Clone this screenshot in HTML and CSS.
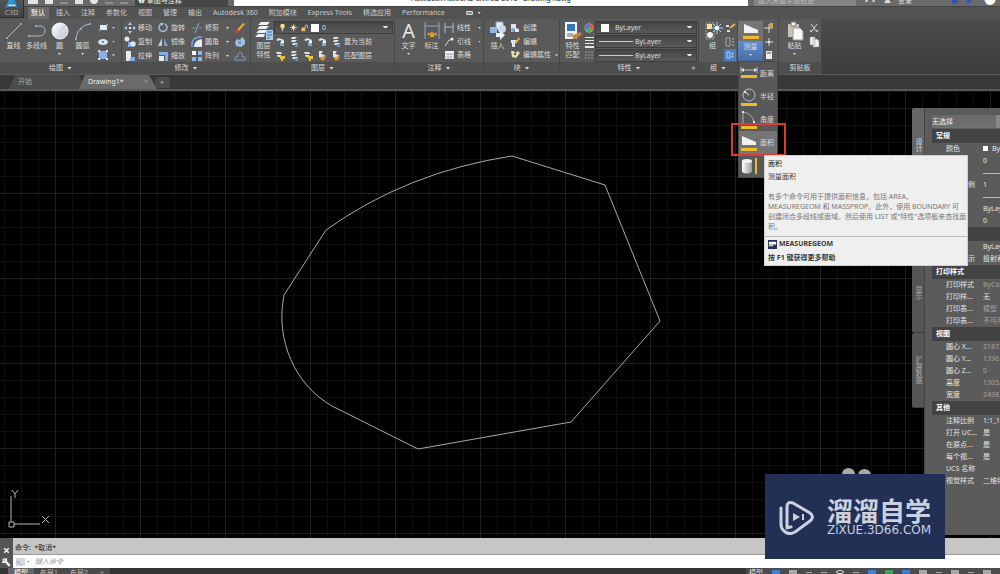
FILE: index.html
```html
<!DOCTYPE html>
<html lang="zh-CN">
<head>
<meta charset="utf-8">
<title>Autodesk AutoCAD Civil 3D 2016 - Drawing1.dwg</title>
<link rel="stylesheet" href="styles.css">
</head>
<body>
<svg class="sprite" aria-hidden="true">
  <defs>
    <linearGradient id="g-ball" x1="0" y1="0" x2="1" y2="1"><stop offset="0" stop-color="#fff"/><stop offset="1" stop-color="#b9c2cd"/></linearGradient>
    <linearGradient id="g-cyl"><stop offset="0" stop-color="#fff"/><stop offset="1" stop-color="#9a9a9a"/></linearGradient>
    <linearGradient id="g-logo" x1="0" y1="0" x2="1" y2="1"><stop offset="0" stop-color="#35b7e8"/><stop offset="1" stop-color="#0c5fa6"/></linearGradient>
  </defs>
  <symbol id="line" viewBox="0 0 20 20"><path d="M3 17 17 3" stroke="#b8c0c9" fill="none"/><path d="M2 16h2v2H2zM16 2h2v2h-2z" fill="#7ea6d6"/></symbol>
  <symbol id="pline" viewBox="0 0 20 20"><path d="M2 15H12C20 15 20 4 12 5H8" stroke="#aeb7c3" fill="none"/><path d="M1 14h2v2H1zM8 4h2v2H8z" fill="#7ea6d6"/></symbol>
  <symbol id="circle" viewBox="0 0 20 20"><circle cx="10" cy="10" r="8" fill="url(#g-ball)" stroke="#f2f4f6"/><path d="M10 10 15 5" stroke="#b4bdc8"/></symbol>
  <symbol id="arc" viewBox="0 0 20 20"><path d="M3 18C4 9 9 4 17 3" stroke="#aeb7c3" fill="none"/><path d="M2 17h2v2H2zM7 7h2v2H7zM16 2h2v2h-2z" fill="#7ea6d6"/></symbol>
  <symbol id="rect" viewBox="0 0 12 12"><path d="M3 3h7v5H3z" fill="#e8edf3"/><path d="M2 7h2v2H2zM9 2h2v2H9z" fill="#6fa3e0"/></symbol>
  <symbol id="ellipse" viewBox="0 0 12 12"><ellipse cx="6" cy="6" rx="5" ry="3" fill="#dbe6f2"/><circle cx="6" cy="6" r="1" fill="#3a78c0"/></symbol>
  <symbol id="hatch" viewBox="0 0 12 12"><path d="M2 2h8v8H2z" fill="#91b9e8"/><path d="M1 1h2v2H1zM9 1h2v2H9zM1 9h2v2H1zM9 9h2v2H9z" fill="#d6e6f8"/><path d="M3 9 9 3M3 6 6 3M6 9 9 6" stroke="#6f9fd6"/></symbol>
  <symbol id="move" viewBox="0 0 12 12"><path d="M6 0 8 3H4zM6 12 8 9H4zM0 6 3 4v4zM12 6 9 4v4z" fill="#a9c9ee"/><path d="M5 5h2v2H5z" fill="#e8eef5"/></symbol>
  <symbol id="rotate" viewBox="0 0 12 12"><path d="M8 2A4 4 0 1 1 4 2" fill="none" stroke="#a4b9d0" stroke-width="1.5"/><path d="M3 1h4L5 4z" fill="#a4c7ef"/></symbol>
  <symbol id="trim" viewBox="0 0 12 12"><path d="M1 6h4M8 6h3" stroke="#6d95c4"/><path d="M4 11 8 1" stroke="#90a9c4"/></symbol>
  <symbol id="copy" viewBox="0 0 12 12"><circle cx="3" cy="3" r="2.5" fill="#dbe6f2"/><path d="M4 6h3v5H4z" fill="#7db0ea"/><circle cx="9" cy="8" r="2.7" fill="#dbe6f2"/></symbol>
  <symbol id="mirror" viewBox="0 0 12 12"><path d="M5 2v8H1z" fill="#c2cfdd"/><path d="M7 2v8h4z" fill="#7f9fc4"/></symbol>
  <symbol id="fillet" viewBox="0 0 12 12"><path d="M1 11V7Q2 2 8 1h3" fill="none" stroke="#6fa3e0" stroke-width="1.5"/><path d="M3 11Q3 4 11 3v8z" fill="#e8edf3"/></symbol>
  <symbol id="stretch" viewBox="0 0 12 12"><path d="M2 1h5v10H2z" fill="#e8edf3"/><path d="M7 7h4v4H5z" fill="#7db0ea"/></symbol>
  <symbol id="scale" viewBox="0 0 12 12"><path d="M2 2h9v9H8V5H2z" fill="#7db0ea"/><path d="M2 6h5v5H2z" fill="#e8edf3"/></symbol>
  <symbol id="array" viewBox="0 0 12 12"><path d="M1 1h4v4H1zM7 1h4v4H7zM1 7h4v4H1zM7 7h4v4H7z" fill="#88b8ee"/><path d="M1 1h4v4H1z" fill="#fff"/></symbol>
  <symbol id="erase" viewBox="0 0 12 12"><path d="M3 8 9 1l2 1-6 7z" fill="#f0a63c"/><path d="M1 9l2-2 2 2-1 2H1z" fill="#d33b3b"/></symbol>
  <symbol id="explode" viewBox="0 0 12 12"><path d="M1 6 3 3 6 4 8 1l3 3v4L7 11 2 10z" fill="#9fbfe2"/><path d="M4 5h3v3H4z" fill="#7697bd"/></symbol>
  <symbol id="offset" viewBox="0 0 12 12"><path d="M1 10h10V7H8V3L6 2 4 4v3H1z" fill="none" stroke="#7897bd"/></symbol>
  <symbol id="layers" viewBox="0 0 20 20"><path d="M7 1h9l-3 3H4zM6 5h9l-3 3H3zM5 9h9l-3 3H2zM4 13h7l-1 3H1z" fill="#eef0f2"/><path d="M12 9h7v10h-7z" fill="#a8c8ec"/><path d="M13 11h5M13 14h5M13 17h3" stroke="#3f6ea8"/></symbol>
  <symbol id="bulb" viewBox="0 0 12 12"><path d="M3 4a3 3 0 0 1 6 0c0 2-2 2-2 5H5C5 6 3 6 3 4z" fill="#f5e08a"/><path d="M5 10h2v1H5z" fill="#ddd"/></symbol>
  <symbol id="sun" viewBox="0 0 12 12"><path d="M6 1v10M1 6h10M3 3l6 6M9 3 3 9" stroke="#d8cf9c"/><circle cx="6" cy="6" r="2" fill="#fff2b0"/></symbol>
  <symbol id="unlock" viewBox="0 0 12 12"><path d="M2 6h5v5H2z" fill="#e5c458"/><path d="M7 7V3h3v4" fill="none" stroke="#ccc"/></symbol>
  <symbol id="lay" viewBox="0 0 12 12"><path d="M2 4 5 2l5 2-1 2-3-2-2 1z" fill="#dfe5ec"/><path d="M6 6h4v4H6z" fill="#87a9d0"/><path d="M7 5h3v2H7z" fill="#f2f4f6"/></symbol>
  <symbol id="lay2" viewBox="0 0 12 12"><path d="M4 1h5L7 3H3zM4 4h5L7 6H3zM5 7h5L8 9H4z" fill="#dfe5ec"/><path d="M7 8h3v3H7z" fill="#6790c0"/></symbol>
  <symbol id="layy" viewBox="0 0 12 12"><path d="M2 2h5l1 2H3zM3 5h4v2H4z" fill="#dfe5ec"/><path d="M6 6h5v3H9v2H7V9H6z" fill="#e7c04b"/></symbol>
  <symbol id="layo" viewBox="0 0 12 12"><path d="M3 1h4L5 4l4 1-2 2H3z" fill="#dfe5ec"/><path d="M3 7h4l3-2-1 4-3 2z" fill="#e29338"/></symbol>
  <symbol id="dim" viewBox="0 0 20 20"><path d="M3 1v17M17 1v17M3 5h14" stroke="#8fa9c7" fill="none"/><path d="m5 14 2-3 1 2 2-3 2 3 2-2 1 4-3-1v2H8v-2z" fill="#e29a35"/></symbol>
  <symbol id="linear" viewBox="0 0 12 12"><path d="M2 1v10M10 1v10M2 5h8" stroke="#a8bdd5" fill="none"/></symbol>
  <symbol id="leader" viewBox="0 0 12 12"><path d="M2 10 6 4h2" stroke="#c9d2dc" fill="none"/><circle cx="9" cy="3" r="1.5" fill="#eee"/></symbol>
  <symbol id="table" viewBox="0 0 12 12"><path d="M2 2h9v8H2z" fill="#f0f3f6"/><path d="M2 5h9M2 8h9M5 4v6M8 4v6" stroke="#a3b4c6"/></symbol>
  <symbol id="insert" viewBox="0 0 20 20"><path d="M8 1h7v7H8z" fill="#e8edf3" stroke="#92adc9"/><circle cx="14" cy="8" r="4" fill="#cbd7e4"/><path d="M2 6h7v6H2z" fill="#8fb6e5"/><path d="M8 12h4v-2l5 4-5 5v-3H8z" fill="#eef1f4"/></symbol>
  <symbol id="create" viewBox="0 0 12 12"><path d="M2 2h5v4l3 1v3H6V7H4v3H2z" fill="#dfe5ec"/><circle cx="4" cy="8" r="2" fill="#86a8ce"/></symbol>
  <symbol id="bedit" viewBox="0 0 12 12"><path d="M2 4h6v3H6v4H3V7H2z" fill="#dfe5ec"/><path d="M6 6 10 1l1 2-4 5z" fill="#e2a145"/></symbol>
  <symbol id="attr" viewBox="0 0 12 12"><path d="M2 2h3l1 2 3-2 2 2-4 5-4-1z" fill="#e4d8b8"/><path d="M5 4h2v2H5z" fill="#705b30"/></symbol>
  <symbol id="match" viewBox="0 0 20 20"><path d="M2 1h12v17H2z" fill="#f2f4f6"/><path d="M4 3h8v7H4z" fill="#3675bc"/><path d="M4 13h6M4 15h6" stroke="#667"/><path d="m10 14 7-3 2 2-6 5h-3z" fill="#c98838"/></symbol>
  <symbol id="wheel" viewBox="0 0 12 12"><circle cx="6" cy="6" r="4.5" fill="#f3e16b"/><path d="M6 6V1.500A4.500 4.500 0 0 1 10 8z" fill="#e0574b"/><path d="M6 6 10 8A4.500 4.500 0 0 1 2 8z" fill="#4fae5e"/><path d="M6 6 2 8A4.500 4.500 0 0 1 6 1.500z" fill="#4b7fd6"/></symbol>
  <symbol id="weights" viewBox="0 0 12 12"><path d="M2 1h9v1H2zM2 4h9v1H2zM2 7h9v1H2zM2 10h9v2H2z" fill="#e6e6e6"/></symbol>
  <symbol id="ltypes" viewBox="0 0 12 12"><path d="M2 3h9M2 6h9M2 9h9" stroke="#9a9a9a" stroke-dasharray="2 1"/></symbol>
  <symbol id="group" viewBox="0 0 20 20"><path d="M3 2h8v16H3z" fill="none" stroke="#a9a9a9" stroke-dasharray="2 1"/><path d="M4 3h5v5H4z" fill="#f4e59a"/><circle cx="7" cy="14" r="3" fill="#f2f2f2"/><path d="M14 1v12M8 7h12M10 3l8 8M18 3l-8 8" stroke="#9fd3f5"/><circle cx="14" cy="7" r="2" fill="#fff"/></symbol>
  <symbol id="ungroup" viewBox="0 0 12 12"><path d="M2 3h3v2H2zM3 8h3v2H3z" fill="#ddd"/><path d="M6 6 11 2" stroke="#e8b53e" stroke-width="2"/></symbol>
  <symbol id="gedit" viewBox="0 0 12 12"><path d="M2 2h4v8H2z" fill="none" stroke="#aaa"/><path d="M8 3h2M8 6h2M8 9h2" stroke="#bbb"/></symbol>
  <symbol id="gsel" viewBox="0 0 12 12"><path d="M0 0h12v12H0z" fill="#4e7fc0"/><path d="M3 3h3v6H3zM8 4h1v1H8zM8 7h1v1H8z" fill="none" stroke="#b8d0ee"/></symbol>
  <symbol id="m-dist" viewBox="0 0 20 20"><path d="M2 3v6M18 3v6M2 6h16" stroke="#a9b9cc" fill="none"/><path d="m2 6 3-2v4zM18 6l-3-2v4z" fill="#dce5f0"/><path d="M2 11h16v3H2z" fill="#edb92e"/></symbol>
  <symbol id="m-rad" viewBox="0 0 20 20"><circle cx="10" cy="8" r="6" fill="none" stroke="#b9bec4"/><path d="M10 8 6 5" stroke="#eee"/><circle cx="6" cy="5" r="1" fill="#fff"/><path d="M2 16h16v3H2z" fill="#edb92e"/></symbol>
  <symbol id="m-ang" viewBox="0 0 20 20"><path d="M4 1v13h12M4 2C11 3 14 7 15 13" fill="none" stroke="#aab2bb"/><path d="M3 1h2v2H3zM14 11h2v2h-2z" fill="#dde3e9"/><path d="M2 16h16v3H2z" fill="#edb92e"/></symbol>
  <symbol id="m-area" viewBox="0 0 20 20"><path d="M3 3v9h14V9z" fill="#f0f1f2"/><path d="M2 15h16v3H2z" fill="#edb92e"/></symbol>
  <symbol id="m-vol" viewBox="0 0 20 20"><path d="M3 5q5-3 10 0v11q-5 3-10 0z" fill="url(#g-cyl)"/><ellipse cx="8" cy="5" rx="5" ry="2" fill="#f1f1f1"/><path d="M16 2h2v16h-2z" fill="#edb92e"/></symbol>
  <symbol id="qsel" viewBox="0 0 12 12"><path d="M6 2v9M1 6h9" stroke="#ddd"/><path d="M7 1h3v4H7z" fill="#e2a145"/></symbol>
  <symbol id="point" viewBox="0 0 12 12"><path d="M6 2v8M2 6h8" stroke="#d5d8dc"/><circle cx="6" cy="6" r="1" fill="#fff"/></symbol>
  <symbol id="calc" viewBox="0 0 12 12"><path d="M3 2h6v8H3z" fill="#eee"/><path d="M4 3h4v2H4z" fill="#899"/></symbol>
  <symbol id="paste" viewBox="0 0 20 20"><path d="M3 3h11v13H3z" fill="#c8c3b5"/><path d="M6 1h5v4H6z" fill="#eee" stroke="#777"/><path d="M8 7h7l3 3v9H8z" fill="#f5f6f7" stroke="#999"/></symbol>
  <symbol id="cut" viewBox="0 0 12 12"><path d="M3 2 8 9M9 2 4 9" stroke="#ccc"/><path d="M2 8h2v2H2zM8 8h2v2H8z" fill="#bbb"/></symbol>
  <symbol id="clip" viewBox="0 0 12 12"><path d="M2 1h5v8H2zM5 3h4l2 2v6H5z" fill="#f2f2f2" stroke="#888" stroke-width=".5"/></symbol>
</svg>

<header class="titlebar">
  <div class="quick">
    <i class="q wide"></i><i class="q"></i><i class="q dim"></i><i class="q"></i><i class="q round"></i><i class="q dim"></i><i class="q dim"></i>
    <button class="workspace">✿ 草图与注释</button>
  </div>
  <div class="doc-title">Autodesk AutoCAD Civil 3D 2016 &nbsp; Drawing1.dwg</div>
  <div class="infocenter">
    <input class="search" aria-label="搜索" placeholder="键入关键字或短语">
    <span class="info">▪▪</span><span class="info">▲</span><span class="info">登录</span><span class="info blue shift">■</span><span class="info blue">▲</span><span class="info end">●</span>
  </div>
</header>
<button class="app-button" aria-label="应用程序菜单">
  <svg viewBox="0 0 16 10" class="app-logo"><path d="M0 9 5 0h6l5 9-4-1-2-3H6L4 8z" fill="url(#g-logo)"/><path d="M4 5h8v2H4z" fill="#bfe8fa"/></svg>
  <span>C3D</span>
</button>

<nav class="tabs">
  <button class="tab active">默认</button><button class="tab">插入</button><button class="tab">注释</button><button class="tab">参数化</button><button class="tab">视图</button><button class="tab">管理</button><button class="tab">输出</button><button class="tab">Autodesk 360</button><button class="tab">附加模块</button><button class="tab">Express Tools</button><button class="tab">精选应用</button><button class="tab">Performance</button>
  <button class="tab-toggle" aria-label="最小化功能区"><i class="pill"></i><i class="arr"></i></button>
</nav>

<section class="ribbon">
  <div class="panel">
    <div class="tools draw">
      <button class="big"><svg><use href="#line"/></svg>直线</button>
      <button class="big"><svg><use href="#pline"/></svg>多段线</button>
      <button class="big"><svg><use href="#circle"/></svg>圆<i class="arr"></i></button>
      <button class="big"><svg><use href="#arc"/></svg>圆弧<i class="arr"></i></button>
      <div class="stack">
        <button class="small" aria-label="矩形"><svg><use href="#rect"/></svg><i class="arr"></i></button>
        <button class="small" aria-label="椭圆"><svg><use href="#ellipse"/></svg><i class="arr"></i></button>
        <button class="small" aria-label="图案填充"><svg><use href="#hatch"/></svg><i class="arr"></i></button>
      </div>
    </div>
    <h2 class="panel-title">绘图<i class="arr"></i></h2>
  </div>

  <div class="panel">
    <div class="tools modify">
      <button class="small"><svg><use href="#move"/></svg>移动</button><button class="small"><svg><use href="#rotate"/></svg>旋转</button><button class="small"><svg><use href="#trim"/></svg>修剪<i class="arr"></i></button><button class="small" aria-label="删除"><svg><use href="#erase"/></svg></button>
      <button class="small"><svg><use href="#copy"/></svg>复制</button><button class="small"><svg><use href="#mirror"/></svg>镜像</button><button class="small"><svg><use href="#fillet"/></svg>圆角<i class="arr"></i></button><button class="small" aria-label="分解"><svg><use href="#explode"/></svg></button>
      <button class="small"><svg><use href="#stretch"/></svg>拉伸</button><button class="small"><svg><use href="#scale"/></svg>缩放</button><button class="small"><svg><use href="#array"/></svg>阵列<i class="arr"></i></button><button class="small" aria-label="偏移"><svg><use href="#offset"/></svg></button>
    </div>
    <h2 class="panel-title">修改<i class="arr"></i></h2>
  </div>

  <div class="panel">
    <div class="tools">
      <button class="big tall"><svg><use href="#layers"/></svg>图层<br>特性</button>
      <div class="stack layer-stack">
        <div class="combo">
          <svg><use href="#bulb"/></svg><svg><use href="#sun"/></svg><svg><use href="#unlock"/></svg><i class="swatch"></i>
          <select aria-label="图层"><option>0</option></select>
        </div>
        <div class="layer-row">
          <button class="small" aria-label="关闭图层"><svg><use href="#lay"/></svg></button><button class="small" aria-label="隔离图层"><svg><use href="#lay2"/></svg></button><button class="small" aria-label="冻结图层"><svg><use href="#lay"/></svg></button><button class="small" aria-label="锁定图层"><svg><use href="#lay"/></svg></button><button class="small"><svg><use href="#lay2"/></svg>置为当前</button>
        </div>
        <div class="layer-row">
          <button class="small" aria-label="打开图层"><svg><use href="#layy"/></svg></button><button class="small" aria-label="取消隔离"><svg><use href="#lay2"/></svg></button><button class="small" aria-label="解冻图层"><svg><use href="#layy"/></svg></button><button class="small" aria-label="解锁图层"><svg><use href="#layo"/></svg></button><button class="small"><svg><use href="#layo"/></svg>匹配图层</button>
        </div>
      </div>
    </div>
    <h2 class="panel-title">图层<i class="arr"></i></h2>
  </div>

  <div class="panel">
    <div class="tools">
      <button class="big"><span class="letter">A</span>文字<i class="arr"></i></button>
      <button class="big"><svg><use href="#dim"/></svg>标注</button>
      <div class="stack wide-stack">
        <button class="small"><svg><use href="#linear"/></svg>线性<i class="arr"></i></button>
        <button class="small"><svg><use href="#leader"/></svg>引线<i class="arr"></i></button>
        <button class="small"><svg><use href="#table"/></svg>表格</button>
      </div>
    </div>
    <h2 class="panel-title">注释<i class="arr"></i></h2>
  </div>

  <div class="panel">
    <div class="tools">
      <button class="big"><svg><use href="#insert"/></svg>插入</button>
      <div class="stack block-stack">
        <button class="small"><svg><use href="#create"/></svg>创建</button>
        <button class="small"><svg><use href="#bedit"/></svg>编辑</button>
        <button class="small"><svg><use href="#attr"/></svg>编辑属性<i class="arr near"></i></button>
      </div>
    </div>
    <h2 class="panel-title">块<i class="arr"></i></h2>
  </div>

  <div class="panel">
    <div class="tools">
      <button class="big tall"><svg><use href="#match"/></svg>特性<br>匹配</button>
      <div class="stack">
        <button class="small" aria-label="颜色"><svg><use href="#wheel"/></svg></button>
        <button class="small" aria-label="线宽"><svg><use href="#weights"/></svg></button>
        <button class="small" aria-label="线型"><svg><use href="#ltypes"/></svg></button>
      </div>
      <div class="stack prop-stack">
        <div class="combo"><i class="swatch lead"></i><select aria-label="对象颜色"><option>ByLayer</option></select></div>
        <div class="combo"><i class="rule"></i><select aria-label="对象线宽"><option>ByLayer</option></select></div>
        <div class="combo"><i class="rule"></i><select aria-label="对象线型"><option>ByLayer</option></select></div>
      </div>
    </div>
    <h2 class="panel-title">特性<i class="arr"></i><span class="launcher">»</span></h2>
  </div>

  <div class="panel">
    <div class="tools">
      <button class="big"><svg><use href="#group"/></svg>组</button>
      <div class="stack">
        <button class="small" aria-label="解除编组"><svg><use href="#ungroup"/></svg></button>
        <button class="small" aria-label="组编辑"><svg><use href="#gedit"/></svg></button>
        <button class="small" aria-label="启用组选择"><svg><use href="#gsel"/></svg></button>
      </div>
    </div>
    <h2 class="panel-title">组<i class="arr"></i></h2>
  </div>

  <div class="panel utilities">
    <div class="tools flush">
      <button class="big measure"><svg><use href="#m-area"/></svg><span class="measure-label">测量<i class="arr"></i></span></button>
      <div class="stack">
        <button class="small" aria-label="快速选择"><svg><use href="#qsel"/></svg></button>
        <button class="small" aria-label="点坐标"><svg><use href="#point"/></svg></button>
        <button class="small" aria-label="计算器"><svg><use href="#calc"/></svg></button>
      </div>
    </div>
    <div class="menu">
      <button class="menu-item"><svg><use href="#m-dist"/></svg>距离</button>
      <button class="menu-item"><svg><use href="#m-rad"/></svg>半径</button>
      <button class="menu-item"><svg><use href="#m-ang"/></svg>角度</button>
      <button class="menu-item hover"><svg><use href="#m-area"/></svg>面积</button>
      <button class="menu-item" aria-label="体积"><svg><use href="#m-vol"/></svg></button>
      <div class="marker"></div>
      <aside class="tooltip" role="tooltip">
        <div class="tip-body">
          <strong class="tip-title">面积</strong>
          <p>测量面积</p>
          <p class="tip-text">有多个命令可用于提供面积信息，包括 AREA、<br>MEASUREGEOM 和 MASSPROP。此外，使用 BOUNDARY 可<br>创建闭合多段线或面域。然后使用 LIST 或"特性"选项板来查找面<br>积。</p>
        </div>
        <div class="tip-foot">
          <strong class="tip-cmd"><svg viewBox="0 0 10 10"><path d="M0 0h10v10H0z" fill="#222f6b"/><path d="M1 2h8v3H1z" fill="#fff"/><path d="M1 5h5v2H1z" fill="#e8d84a"/></svg>MEASUREGEOM</strong>
          <strong>按 F1 键获得更多帮助</strong>
        </div>
      </aside>
    </div>
  </div>

  <div class="panel">
    <div class="tools">
      <button class="big paste"><svg><use href="#paste"/></svg>粘贴<i class="arr"></i></button>
      <div class="stack">
        <button class="small" aria-label="剪切"><svg><use href="#cut"/></svg></button>
        <button class="small" aria-label="复制剪裁"><svg><use href="#clip"/></svg></button>
      </div>
    </div>
    <h2 class="panel-title">剪贴板</h2>
  </div>
</section>

<nav class="files">
  <button class="file">开始</button>
  <button class="file current">Drawing1*<span class="close">×</span></button>
  <button class="file add" aria-label="新图形">+</button>
</nav>

<main class="canvas">
  <svg class="drawing" role="img" aria-label="多段线图形">
    <defs>
      <pattern id="minor" width="17" height="17" patternUnits="userSpaceOnUse" x="55" y="17"><path d="M.5 0V17M0 .5H17" stroke="#0e0e0e" fill="none"/></pattern>
      <pattern id="major" width="85" height="85" patternUnits="userSpaceOnUse" x="55" y="17"><path d="M.5 0V85M0 .5H85" stroke="#202020" fill="none"/></pattern>
    </defs>
    <rect width="100%" height="100%" fill="url(#minor)"/>
    <rect width="100%" height="100%" fill="url(#major)"/>
    <path d="M512 65 605 94 660 230 571 331 418 358 332 315C295 294 275 249 284 204L326 139Q407 81 512 65Z" fill="none" stroke="#a8a8a8"/>
  </svg>
  <svg class="ucs" viewBox="0 0 52 46" aria-hidden="true"><path d="M5 32V6M8 34H34M3 32h5v5H3zM6 0 9 4 12 0M9 4V8M36 26l7 7M43 26l-7 7" fill="none" stroke="#b5b5b5"/></svg>
  <i class="blob"></i><i class="blob second"></i>

  <aside class="palette">
    <div class="side-tabs"><button class="side design">设计</button><button class="side shown">显示</button><button class="side ext">扩展数据</button></div>
    <div class="props">
      <select class="object-type" aria-label="选择对象"><option>无选择</option></select>
      <table class="prop-table">
        <colgroup><col class="name-col"><col></colgroup>
        <tbody>
          <tr><th colspan="2">常规</th></tr>
          <tr><td>颜色</td><td><i class="chip"></i>ByLayer</td></tr>
          <tr><td></td><td>0</td></tr>
          <tr><td></td><td><i class="dash"></i></td></tr>
          <tr><td class="tail">例</td><td>1</td></tr>
          <tr><td></td><td><i class="dash"></i></td></tr>
          <tr><td></td><td>ByLayer</td></tr>
          <tr><td></td><td>0</td></tr>
        </tbody>
        <tbody>
          <tr><th colspan="2">&nbsp;</th></tr>
          <tr><td></td><td>ByLayer</td></tr>
          <tr><td class="tail">示</td><td>投射和</td></tr>
        </tbody>
        <tbody>
          <tr><th colspan="2">打印样式</th></tr>
          <tr><td>打印样式</td><td class="off">ByColor</td></tr>
          <tr><td>打印样...</td><td>无</td></tr>
          <tr><td>打印表...</td><td class="off">模型</td></tr>
          <tr><td>打印表...</td><td class="off">不可用</td></tr>
        </tbody>
        <tbody>
          <tr><th colspan="2">视图</th></tr>
          <tr><td>圆心 X...</td><td class="off">2187.</td></tr>
          <tr><td>圆心 Y...</td><td class="off">1396.</td></tr>
          <tr><td>圆心 Z...</td><td class="off">0</td></tr>
          <tr><td>高度</td><td class="off">1305.</td></tr>
          <tr><td>宽度</td><td class="off">2498.</td></tr>
        </tbody>
        <tbody>
          <tr><th colspan="2">其他</th></tr>
          <tr><td>注释比例</td><td>1:1_1</td></tr>
          <tr><td>打开 UC...</td><td>是</td></tr>
          <tr><td>在原点...</td><td>是</td></tr>
          <tr><td>每个视...</td><td>是</td></tr>
          <tr><td>UCS 名称</td><td></td></tr>
          <tr><td>视觉样式</td><td>二维线</td></tr>
        </tbody>
      </table>
    </div>
  </aside>
</main>

<section class="command">
  <div class="grip">
    <button aria-label="关闭"><svg viewBox="0 0 8 8"><path d="m2 2 4 4M6 2 2 6" stroke="#eee" stroke-width="1.500"/></svg></button>
    <button aria-label="自定义"><svg viewBox="0 0 8 8"><path d="m3 3 4 4" stroke="#eee" stroke-width="2"/><path d="M1 1h2v2H1zM4 0v4H0" fill="none" stroke="#eee"/></svg></button>
  </div>
  <div class="console">
    <div class="history">命令:&nbsp; *取消*</div>
    <label class="prompt"><span class="prompt-icon">&gt;_</span><i class="arr"></i><input aria-label="命令行" placeholder="键入命令"></label>
  </div>
</section>

<footer class="status">
  <button class="layout on">模型</button><button class="layout">布局1</button><button class="layout">布局2</button><button class="layout">+</button>
  <div class="status-icons">
    <span>模型</span><i class="s blue"></i><i class="s"></i><i class="s thin"></i><i class="s thin"></i><i class="s ring"></i><i class="s thin"></i><i class="s blue"></i><i class="s green"></i><i class="s blue"></i><i class="s"></i><i class="s thin"></i><i class="s"></i><i class="s thin"></i><i class="s"></i>
  </div>
</footer>

<div class="watermark">
  <svg viewBox="0 0 36 36" class="wm-logo"><path d="M8 29V8q0-6 6-4l17 10q5 4 0 8L16 33q-7 4-12-2Q2 29 2 24V9" fill="none" stroke="#cbd1de" stroke-width="3" stroke-linecap="round" stroke-linejoin="round"/><path d="M8 27q2 3 5 0" fill="none" stroke="#cbd1de" stroke-width="3"/><path d="m14 14 7 4-7 4zM23 15h2v6h-2z" fill="#cbd1de"/></svg>
  <div class="wm-text"><div class="wm-name">溜溜自学</div><div class="wm-url">ZiXUE.3D66.COM</div></div>
</div>
</body>
</html>
```

FILE: styles.css
```css
* { box-sizing: border-box; margin: 0; padding: 0; }
html, body { height: 100%; }
body {
  display: flex; flex-direction: column; position: relative; overflow: hidden;
  background: #000; color: #dcdcdc;
  font: 7px/10px "Noto Sans", "Noto Sans CJK SC", sans-serif;
}
button, input, select { font: inherit; color: inherit; background: none; border: 0; border-radius: 0; appearance: none; outline: 0; }
button { white-space: nowrap; }
svg { display: block; flex: none; }
i { display: block; flex: none; font-style: normal; }
.sprite { position: absolute; width: 0; height: 0; }
.arr { width: 3px; height: 2px; background: #ddd; clip-path: polygon(0 0, 100% 0, 50% 100%); }

/* title bar */
.titlebar { flex: none; display: flex; height: 7px; overflow: hidden; background: #6a6a6a; border-bottom: 1px solid #444; }
.quick { width: 234px; padding: 0 6px 0 28px; display: flex; gap: 7px; align-items: flex-end; background: #696969; }
.q { width: 8px; height: 4px; background: #e4e4e4; margin-bottom: 2px; }
.q.wide { width: 10px; }
.q.dim { background: #8e8e8e; height: 2px; }
.q.round { border-radius: 0 0 4px 4px; }
.workspace { margin-left: auto; width: 106px; background: #474747; text-align: left; padding: 0 3px; color: #eee; }
.doc-title { flex: 1 1 514px; display: flex; justify-content: center; align-items: flex-end; background: #fff; color: #222; font-size: 7px; line-height: 10px; padding-bottom: 2px; }
.infocenter { flex: 0 0 252px; padding: 0 4px 0 6px; display: flex; gap: 7px; align-items: flex-end; }
.search { width: 102px; height: 12px; background: #858585; padding-left: 4px; }
.search::placeholder { color: #bbb; opacity: 1; }
.info { color: #ddd; }
.info.blue { color: #3556a8; }
.info.shift { margin-left: 32px; }
.info.end { margin-left: auto; font-size: 12px; color: #fff; }
.app-button {
  position: absolute; left: 0; top: 0; width: 24px; height: 18px; z-index: 2;
  background: linear-gradient(#555, #444); border-right: 1px solid #2d2d2d; border-bottom: 1px solid #2d2d2d;
  display: flex; flex-direction: column; align-items: center; color: #aaa; line-height: 8px;
}
.app-logo { width: 16px; height: 9px; }

/* ribbon tabs */
.tabs { flex: none; display: flex; height: 12px; padding-left: 28px; background: #535353; color: #ccc; }
.tab { padding: 0 6px 0 5px; line-height: 12px; }
.tab.active { background: #6b6b6b; color: #fff; padding: 0 4px 0 3px; margin-right: 2px; }
.tab-toggle { display: flex; align-items: center; gap: 5px; margin-left: 15px; }
.pill { width: 7px; height: 4px; border: 1px solid #ddd; background: #888; border-radius: 1px; }

/* ribbon */
.ribbon { flex: none; display: flex; height: 56px; background: linear-gradient(#4c4c4c, #3c3c3c); border-bottom: 1px solid #5b5b5b; }
.panel { display: flex; flex-direction: column; background: #5a5a5a; border-right: 1px solid #484848; }
.tools { flex: none; display: flex; height: 43px; padding: 2px 1px 0 2px; }
.tools.flush { padding-left: 0; }
.panel-title { flex: 1; display: flex; align-items: center; justify-content: center; gap: 4px; background: #4e4e4e; font-size: 7px; font-weight: 400; position: relative; }
.panel-title .arr { width: 5px; height: 3px; }
.launcher { position: absolute; right: 3px; top: 1px; }
.big { width: 23px; display: flex; flex-direction: column; align-items: center; }
.big svg { width: 20px; height: 20px; }
.big .arr { margin-top: 2px; }
.big.tall { width: 21px; line-height: 9px; }
.letter { height: 20px; font: 20px/20px "Open Sans", "Noto Sans", sans-serif; color: #eee; }
.stack { display: flex; flex-direction: column; }
.small { height: 14px; display: flex; align-items: center; gap: 2px; text-align: left; }
.small svg { width: 12px; height: 12px; }
.small .arr { margin-left: 5px; }
.small .arr.near { margin-left: 2px; }
.draw .stack { padding-left: 3px; width: 26px; }
.draw .small .arr { margin-left: 1px; }
.modify { display: grid; grid-template-columns: 33px 34px 43px 15px; grid-auto-rows: 14px; }
.layer-stack { width: 119px; }
.layer-row { display: grid; grid-template-columns: repeat(4, 14px) 1fr; }
.combo { height: 13px; margin-bottom: 1px; display: flex; align-items: center; gap: 2px; padding: 0 3px; background: linear-gradient(#444, #5a5a5a); border: 1px solid #3c3c3c; }
.combo svg { width: 9px; height: 9px; }
.combo select { flex: 1; min-width: 0; height: 11px; line-height: 11px; background: linear-gradient(#ddd, #ddd) right 2px center / 3px 1px no-repeat, linear-gradient(#ddd, #ddd) right 1px top 4px / 5px 1px no-repeat; }
.swatch { width: 8px; height: 8px; background: #fff; margin-right: 1px; }
.swatch.lead { margin-left: 2px; margin-right: 4px; }
.rule { width: 34px; height: 1px; background: #ccc; }
.wide-stack { width: 39px; }
.block-stack { width: 49px; }
.prop-stack { width: 102px; }
.utilities { position: relative; width: 41px; }
.measure { width: 25px; background: linear-gradient(#777, #686868); }
.measure-label { width: 100%; height: 20px; display: flex; flex-direction: column; align-items: center; padding-top: 1px; background: linear-gradient(#5f8dcb, #4a6da3); }
.paste { width: 27px; }

/* measure menu */
.menu { position: absolute; z-index: 5; top: 42px; left: 0; width: 40px; background: #585858; border: 1px solid #484848; }
.menu-item { width: 100%; height: 23px; display: flex; align-items: center; gap: 1px; }
.menu-item svg { width: 20px; height: 20px; }
.menu-item.hover { background: #747474; }
.marker { position: absolute; left: -8px; top: 61px; width: 55px; height: 33px; border: 2px solid #d93a35; }
.tooltip { position: absolute; left: 25px; top: 93px; width: 204px; background: #efefef; border: 1px solid #d0d0d0; color: #3a3a3a; }
.tip-body { padding: 3px 0 2px 3px; display: flex; flex-direction: column; gap: 3px; border-bottom: 1px solid #bbb; }
.tip-title { font-weight: 500; }
.tip-text { margin-top: 7px; color: #777; padding-bottom: 2px; white-space: nowrap; }
.tip-foot { padding: 2px 3px; display: flex; flex-direction: column; gap: 4px; }
.tip-cmd { display: flex; align-items: center; gap: 2px; }
.tip-cmd svg { width: 9px; height: 9px; }

/* file tabs */
.files { flex: none; display: flex; height: 16px; align-items: flex-end; padding-left: 9px; background: #383838; border-bottom: 2px solid #595959; }
.file { height: 14px; width: 76px; margin-right: -6px; padding: 0 9px; text-align: left; background: #4b4b4b; color: #a9a9a9; clip-path: polygon(0 100%, 6px 0, 70px 0, 100% 100%); }
.file.current { width: 78px; display: flex; align-items: center; justify-content: space-between; background: #6a6a6a; color: #eee; }
.close { color: #999; }
.file.add { width: 15px; height: 11px; margin: 0 0 1px 4px; padding: 0 5px; background: #4b4b4b; color: #ccc; clip-path: none; line-height: 11px; border-radius: 3px; }

/* drawing area */
.canvas { flex: 1; min-height: 0; position: relative; overflow: hidden; background: #000; }
.drawing { width: 100%; height: 100%; }
.ucs { position: absolute; left: 6px; bottom: 2px; width: 52px; height: 46px; }
.blob { position: absolute; right: 145px; bottom: 58px; width: 13px; height: 12px; border-radius: 50%; background: #a9a9a9; }
.blob.second { right: 129px; bottom: 57px; }

/* properties palette */
.palette { position: absolute; right: 0; top: 17px; bottom: 3px; width: 88px; display: flex; overflow: hidden; }
.side-tabs { width: 12px; display: flex; flex-direction: column; }
.side { width: 12px; height: 75px; writing-mode: vertical-rl; line-height: 12px; text-align: center; background: #555; border-bottom: 1px solid #3d3d3d; color: #aaa; border-radius: 2px 0 0 2px; }
.side.design { background: #666; color: #ddd; }
.side.shown { height: 150px; padding-top: 70px; }
.props { flex: 1; min-width: 0; padding: 7px 0 0 7px; background: #5b5b5b; border-left: 1px solid #444; }
.object-type { display: block; width: 100%; height: 13px; background: linear-gradient(#6a6a6a, #707070); color: #eee; border-right: 4px solid #888; margin-bottom: 1px; }
.prop-table { width: 100%; border-spacing: 0; table-layout: fixed; }
.name-col { width: 51px; }
.prop-table th { height: 14px; padding-left: 4px; text-align: left; font-weight: 700; background: #434343; color: #fff; line-height: 12px; }
.prop-table td { height: 12px; line-height: 12px; color: #e6e6e6; white-space: nowrap; }
.prop-table td:first-child { padding-left: 14px; }
.prop-table td.tail { padding: 0 8px 0 0; text-align: right; }
.prop-table td.off { color: #a2a2a2; }
.chip { display: inline-block; width: 5px; height: 5px; background: #fff; margin-right: 4px; }
.dash { height: 1px; background: #bbb; }

/* command line */
.command { flex: none; display: flex; height: 30px; }
.grip { width: 13px; padding: 8px 2px 0; display: flex; flex-direction: column; gap: 3px; background: #555; }
.grip svg { width: 9px; height: 9px; }
.console { flex: 1; display: flex; flex-direction: column; }
.history { height: 17px; padding: 5px 2px 0; background: #c6c6c6; color: #222; border-bottom: 1px solid #999; }
.prompt { flex: 1; display: flex; align-items: center; gap: 2px; padding: 0 3px; background: #fff; color: #567; }
.prompt .arr { background: #777; }
.prompt-icon { width: 9px; height: 8px; line-height: 8px; font-size: 6px; background: #d3dae3; }
.prompt input { flex: 1; padding-left: 3px; font-style: italic; }
.prompt input::placeholder { color: #999; opacity: 1; }

/* status bar */
.status { flex: none; display: flex; height: 6px; overflow: hidden; background: #333; padding-left: 8px; }
.layout { height: 10px; line-height: 10px; padding: 0 6px; background: #4a4a4a; color: #bbb; }
.layout.on { background: #666; color: #fff; }
.status-icons { margin-left: auto; width: 254px; display: flex; gap: 9px; line-height: 10px; background: #4c4c4c; padding-left: 3px; }
.s { width: 8px; height: 4px; margin-top: 2px; background: #aaa; }
.s.thin { width: 6px; height: 1px; margin-top: 4px; }
.s.blue { background: #3a7fd0; }
.s.green { background: #41a35a; }
.s.ring { background: none; border: 1px solid #ccc; border-radius: 50%; }

/* watermark */
.watermark { position: absolute; z-index: 6; right: 55px; bottom: 15px; height: 85px; width: 180px; padding: 0 13px 0 14px; display: flex; align-items: center; gap: 12px; background: #223056; color: #cbd1de; }
.wm-logo { width: 36px; height: 36px; }
.wm-name { font: 700 26px/26px "Noto Sans CJK SC", sans-serif; white-space: nowrap; }
.wm-url { font: 12px/14px "DejaVu Sans", sans-serif; white-space: nowrap; }
```
